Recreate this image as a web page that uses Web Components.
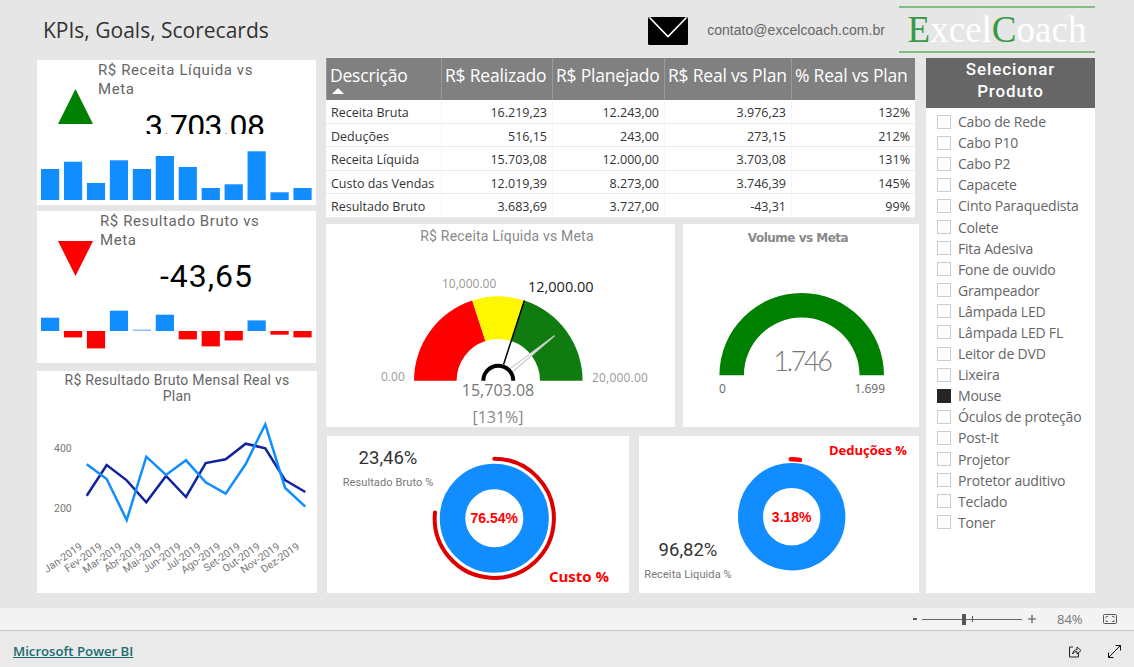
<!DOCTYPE html>
<html lang="pt-BR">
<head>
<meta charset="utf-8">
<title>KPIs, Goals, Scorecards</title>
<style>
	html, body { margin: 0; height: 100%; }
	body {
		width: 1134px;
		height: 667px;
		overflow: hidden;
		background: #e6e6e6;
		display: flex;
		flex-direction: column;
		font-family: "Open Sans", sans-serif;
	}
	#main {
		flex: none;
		height: 550px;
		display: flex;
		padding-left: 37px;
	}
	.col { display: flex; flex-direction: column; }
	#left { width: 280px; margin-right: 9px; padding-top: 2px; }
	#middle { width: 593px; margin-right: 7px; }
	.row { display: flex; flex: none; }
</style>
</head>
<body>
	<report-header>KPIs, Goals, Scorecards</report-header>
	<div id="main">
		<div class="col" id="left">
			<kpi-card dir="up" height="145" gap="6" baseline="55" title-left="61" value-left="108" value-top="9" value-clip="27" value-spacing="-0.7"
				values="31,38.3,17,39.7,31,44,33,12,15.7,48.7,7.7,12">
				<span slot="title">R$ Receita Líquida vs Meta</span>
				<span slot="value">3.703.08</span>
			</kpi-card>
			<kpi-card dir="down" height="152" gap="8" baseline="28" title-left="63" value-left="123" value-top="8" value-clip="38" value-spacing="1"
				values="13.3,-6.4,-17.4,20.3,1.6,16.3,-8.4,-15.4,-9.4,10.6,-3.7,-6.4">
				<span slot="title">R$ Resultado Bruto vs Meta</span>
				<span slot="value">-43,65</span>
			</kpi-card>
			<line-chart></line-chart>
		</div>
		<div class="col" id="middle">
			<data-table></data-table>
			<div class="row" style="margin-top:6px;margin-bottom:9px">
				<target-gauge></target-gauge>
				<volume-gauge></volume-gauge>
			</div>
			<div class="row" style="padding-left:1px">
				<donut-card w="302" ml="0" cx="167.3" cy="82.3" outer="54.5" inner="29" arc-r="59.6" arc-w="4" arc-color="#dc0000"
					pct="76.54" start="0" pct-text="76.54%" big="23,46%" big-x="61" big-y="28" small="Resultado Bruto %" small-x="61" small-y="50"
					label="Custo %" label-x="252" label-y="146" label-size="15"></donut-card>
				<donut-card w="280" ml="10" cx="152.7" cy="80.7" outer="53.7" inner="28.7" arc-r="57.4" arc-w="4.4" arc-color="#ff0000"
					pct="2.6" start="-1" pct-text="3.18%" big="96,82%" big-x="49" big-y="120" small="Receita Liquida %" small-x="49" small-y="142"
					label="Deduções %" label-x="229" label-y="19" label-size="13"></donut-card>
			</div>
		</div>
		<product-slicer>
			<span slot="title">Selecionar<br>Produto</span>
			<slicer-item>Cabo de Rede</slicer-item>
			<slicer-item>Cabo P10</slicer-item>
			<slicer-item>Cabo P2</slicer-item>
			<slicer-item>Capacete</slicer-item>
			<slicer-item>Cinto Paraquedista</slicer-item>
			<slicer-item>Colete</slicer-item>
			<slicer-item>Fita Adesiva</slicer-item>
			<slicer-item>Fone de ouvido</slicer-item>
			<slicer-item>Grampeador</slicer-item>
			<slicer-item>Lâmpada LED</slicer-item>
			<slicer-item>Lâmpada LED FL</slicer-item>
			<slicer-item>Leitor de DVD</slicer-item>
			<slicer-item>Lixeira</slicer-item>
			<slicer-item checked>Mouse</slicer-item>
			<slicer-item>Óculos de proteção</slicer-item>
			<slicer-item>Post-It</slicer-item>
			<slicer-item>Projetor</slicer-item>
			<slicer-item>Protetor auditivo</slicer-item>
			<slicer-item>Teclado</slicer-item>
			<slicer-item>Toner</slicer-item>
		</product-slicer>
	</div>
	<zoom-bar></zoom-bar>
	<app-footer>Microsoft Power BI</app-footer>

<script>
const DIN = `Roboto, "Liberation Sans", sans-serif`;
const SEGOE = `"Open Sans", "Noto Sans", sans-serif`;

// Point on a circle, angle in degrees clockwise from the top
function polar(cx, cy, r, deg) {
	const a = deg * Math.PI / 180;
	return [cx + r * Math.sin(a), cy - r * Math.cos(a)];
}

function ringSlice(cx, cy, ro, ri, from, to) {
	const [ax, ay] = polar(cx, cy, ro, from);
	const [bx, by] = polar(cx, cy, ro, to);
	const [cx2, cy2] = polar(cx, cy, ri, to);
	const [dx, dy] = polar(cx, cy, ri, from);
	return `M${ax} ${ay}A${ro} ${ro} 0 0 1 ${bx} ${by}L${cx2} ${cy2}A${ri} ${ri} 0 0 0 ${dx} ${dy}Z`;
}

class ReportHeader extends HTMLElement {
	constructor() {
		super();
		this.attachShadow({ mode: 'open' });
		this.shadowRoot.innerHTML = `
			<style>
				:host {
					display: flex;
					align-items: center;
					height: 58px;
					flex: none;
					padding: 0 39px 0 43px;
				}
				.title {
					font: 21px/1 ${SEGOE};
					color: #333;
					margin-top: 3px;
				}
				.mail {
					margin-left: auto;
					margin-right: 19px;
					margin-top: 4px;
					display: block;
				}
				.email {
					font: 14px/1 "Liberation Sans", sans-serif;
					color: #666;
					margin-right: 14px;
					margin-top: 2px;
					letter-spacing: 0.04px;
				}
				.logo {
					width: 196px;
					height: 43px;
					border-top: 2px solid #80bd80;
					border-bottom: 2px solid #80bd80;
					margin-top: 1px;
					font: 37px/43px "Liberation Serif", serif;
					color: #fff;
					text-align: center;
					white-space: nowrap;
				}
				.logo b { font-weight: normal; color: #3b9a46; }
			</style>
			<span class="title"><slot></slot></span>
			<svg class="mail" width="40" height="28" viewBox="0 0 40 28">
				<rect width="40" height="28" rx="1.5" fill="#000"/>
				<path d="M1.500 0.500L20 19.500 38.500 0.500" fill="none" stroke="#fff" stroke-width="1.600"/>
			</svg>
			<span class="email">contato@excelcoach.com.br</span>
			<div class="logo"><b>E</b>xcel<b>C</b>oach</div>
		`;
	}
}

class KpiCard extends HTMLElement {
	constructor() {
		super();
		this.attachShadow({ mode: 'open' });
	}

	connectedCallback() {
		const up = this.getAttribute('dir') === 'up';
		const baseline = +this.getAttribute('baseline');
		const values = this.getAttribute('values').split(',').map(Number);
		const bars = values.map((v, i) => {
			const x = 4 + i * 22.95;
			const y = v >= 0 ? baseline - v : baseline;
			const fill = v < 0 ? '#ff0000' : (Math.abs(v) < 2 ? '#8cc8ff' : '#118dff');
			return `<rect x="${x}" y="${y}" width="18.2" height="${Math.abs(v)}" fill="${fill}"/>`;
		}).join('');
		const arrow = up
			? `<polygon points="0,35 17.500,0 35,35" fill="#008000"/>`
			: `<polygon points="0,0 35,0 17.500,35" fill="#ff0000"/>`;

		this.shadowRoot.innerHTML = `
			<style>
				:host {
					display: flex;
					flex: none;
					flex-direction: column;
					justify-content: space-between;
					width: 279px;
					height: ${this.getAttribute('height')}px;
					margin-bottom: ${this.getAttribute('gap')}px;
					background: #fff;
					overflow: hidden;
				}
				.top { position: relative; padding-left: ${this.getAttribute('title-left')}px; padding-top: 1px; }
				.arrow { position: absolute; left: 21px; top: ${up ? 29 : 30}px; }
				.title {
					font: 15px/18.500px ${DIN};
					color: #666;
					letter-spacing: 0.6px;
					width: 175px;
				}
				.value {
					height: ${this.getAttribute('value-clip')}px;
					overflow: hidden;
					margin-top: ${this.getAttribute('value-top')}px;
					margin-left: ${this.getAttribute('value-left') - this.getAttribute('title-left')}px;
					font: 32px/38px ${DIN};
					color: #000;
					letter-spacing: ${this.getAttribute('value-spacing')}px;
					white-space: nowrap;
				}
				svg.bars { display: block; }
			</style>
			<div class="top">
				<svg class="arrow" width="35" height="35">${arrow}</svg>
				<div class="title"><slot name="title"></slot></div>
				<div class="value"><slot name="value"></slot></div>
			</div>
			<svg class="bars" width="279" height="60">${bars}</svg>
		`;
	}
}

class LineChart extends HTMLElement {
	constructor() {
		super();
		this.attachShadow({ mode: 'open' });

		const plan = [[170,298],[230,342],[290,465],[349,275],[408,330],[468,286],[527,352],[587,386],[647,297],[706,178],[765,368],[826,425]];
		const real = [[170,392],[230,300],[290,346],[349,412],[408,333],[468,396],[527,294],[587,283],[647,236],[706,250],[765,345],[826,381]];
		const toPoints = list => list.map(p => `${(p[0] / 3 - 7).toFixed(1)},${(p[1] / 3 - 6).toFixed(1)}`).join(' ');
		const months = ['Jan','Fev','Mar','Abr','Mai','Jun','Jul','Ago','Set','Out','Nov','Dez'];
		const labels = months.map((m, i) => {
			const x = 46 + i * 19.75;
			return `<text class="axis" text-anchor="end" transform="translate(${x} 177) rotate(-35)">${m}-2019</text>`;
		}).join('');

		this.shadowRoot.innerHTML = `
			<style>
				:host {
					display: block;
					flex: none;
					width: 280px;
					height: 222px;
					background: #fff;
				}
				.title {
					position: relative;
					font: 14px/16px ${DIN};
					color: #666;
					text-align: center;
					padding: 1px 24px 0;
					letter-spacing: 0.25px;
				}
				svg { position: absolute; display: block; }
				.wrap { position: relative; height: 222px; }
				.axis { font: 10.500px ${DIN}; fill: #777; }
			</style>
			<div class="wrap">
				<svg width="280" height="222">
					<polyline points="${toPoints(real)}" fill="none" stroke="#12239e" stroke-width="2.500"/>
					<polyline points="${toPoints(plan)}" fill="none" stroke="#118dff" stroke-width="2.500"/>
					<text class="axis" x="17" y="81">400</text>
					<text class="axis" x="17" y="141">200</text>
					${labels}
				</svg>
				<div class="title">R$ Resultado Bruto Mensal Real vs Plan</div>
			</div>
		`;
	}
}

class DataTable extends HTMLElement {
	constructor() {
		super();
		this.attachShadow({ mode: 'open' });

		const heads = ['Descrição', 'R$ Realizado', 'R$ Planejado', 'R$ Real vs Plan', '% Real vs Plan'];
		const rows = [
			['Receita Bruta', '16.219,23', '12.243,00', '3.976,23', '132%'],
			['Deduções', '516,15', '243,00', '273,15', '212%'],
			['Receita Líquida', '15.703,08', '12.000,00', '3.703,08', '131%'],
			['Custo das Vendas', '12.019,39', '8.273,00', '3.746,39', '145%'],
			['Resultado Bruto', '3.683,69', '3.727,00', '-43,31', '99%']
		];

		this.shadowRoot.innerHTML = `
			<style>
				:host {
					display: grid;
					flex: none;
					grid-template-columns: 115px 111px 112px 127px 124px;
					grid-template-rows: 42px repeat(5, 23.600px);
					width: 589px;
					height: 160px;
					background: #fff;
					font-family: ${SEGOE};
				}
				.head {
					background: #808080;
					color: #fff;
					font-size: 17.500px;
					line-height: 34px;
					padding: 0 3px;
					border-left: 1px solid #999;
					box-sizing: border-box;
					white-space: nowrap;
					overflow: hidden;
					position: relative;
					letter-spacing: -0.2px;
				}
				.head:first-child { border-left: 0; padding-left: 5px; font-size: 18px; }
				.sort {
					position: absolute;
					left: 5px;
					top: 30px;
					width: 0;
					height: 0;
					border-left: 6.500px solid transparent;
					border-right: 6.500px solid transparent;
					border-bottom: 6px solid #fff;
				}
				.cell {
					font-size: 12.500px;
					line-height: 25px;
					color: #333;
					padding: 0 5px 0 4px;
					text-align: right;
					border-bottom: 1px solid #eaeaea;
					border-left: 1px solid #f6f6f6;
					box-sizing: border-box;
					white-space: nowrap;
					overflow: hidden;
				}
				.cell.name { text-align: left; border-left: 0; padding-left: 5px; }
			</style>
			${heads.map((h, i) => `<div class="head">${h}${i === 0 ? '<span class="sort"></span>' : ''}</div>`).join('')}
			${rows.map(r => r.map((c, i) => `<div class="cell ${i === 0 ? 'name' : ''}">${c}</div>`).join('')).join('')}
		`;
	}
}

class TargetGauge extends HTMLElement {
	constructor() {
		super();
		this.attachShadow({ mode: 'open' });

		// Card starts at 326,224
		const cx = 172.3, cy = 156.7, ro = 84.3, ri = 41.7;
		const deg = f => -90 + f * 180;
		const [t1x, t1y] = polar(cx, cy, ro, deg(0.6));
		const [t2x, t2y] = polar(cx, cy, 17, deg(0.6));
		const tip = polar(cx, cy, 72, deg(0.785));
		const base1 = polar(cx, cy, 15, deg(0.785) - 8);
		const base2 = polar(cx, cy, 15, deg(0.785) + 8);

		this.shadowRoot.innerHTML = `
			<style>
				:host { display: block; flex: none; width: 349px; height: 203px; background: #fff; margin-right: 8px; }
				svg { display: block; }
				text { font-family: ${SEGOE}; }
				.title { font: 14px ${DIN}; fill: #888; letter-spacing: 0.2px; }
				.tick { font-size: 12px; fill: #999; }
			</style>
			<svg width="349" height="203">
				<text class="title" x="181" y="17" text-anchor="middle">R$ Receita Líquida vs Meta</text>
				<path d="${ringSlice(cx, cy, ro, ri, deg(0), deg(0.4))}" fill="#ff0000"/>
				<path d="${ringSlice(cx, cy, ro, ri, deg(0.4), deg(0.6))}" fill="#fff700"/>
				<path d="${ringSlice(cx, cy, ro, ri, deg(0.6), deg(1))}" fill="#107c10"/>
				<line x1="${t1x}" y1="${t1y}" x2="${t2x}" y2="${t2y}" stroke="#000" stroke-width="1.500"/>
				<polygon points="${tip.join(',')} ${base1.join(',')} ${base2.join(',')}" fill="#fff" stroke="#ccc" stroke-width="1.200"/>
				<path d="M${cx - 15} ${cy}A15 15 0 0 1 ${cx + 15} ${cy}" fill="none" stroke="#000" stroke-width="4"/>
				<text class="tick" x="55" y="157">0.00</text>
				<text class="tick" x="116" y="64">10,000.00</text>
				<text x="202" y="68" style="font-size:14.500px;fill:#222">12,000.00</text>
				<text class="tick" x="266" y="158" style="letter-spacing:0.2px">20,000.00</text>
				<text x="172" y="172" text-anchor="middle" style="font-size:16px;fill:#777">15,703.08</text>
				<text x="172" y="199" text-anchor="middle" style="font-size:16px;fill:#888">[131%]</text>
			</svg>
		`;
	}
}

class VolumeGauge extends HTMLElement {
	constructor() {
		super();
		this.attachShadow({ mode: 'open' });

		const cx = 118.7, cy = 151.3;
		this.shadowRoot.innerHTML = `
			<style>
				:host { display: block; flex: none; width: 236px; height: 203px; background: #fff; }
				svg { display: block; }
				.title { font: bold 12px "DejaVu Sans", sans-serif; fill: #888; letter-spacing: -0.5px; }
				.value { font: 300 27px Lato, ${SEGOE}; fill: #777; letter-spacing: -2.4px; }
				.tick { font: 12px ${SEGOE}; fill: #666; }
			</style>
			<svg width="236" height="203">
				<text class="title" x="115" y="18" text-anchor="middle">Volume vs Meta</text>
				<path d="${ringSlice(cx, cy, 82.3, 57.8, -90, 90)}" fill="#008000"/>
				<text class="value" x="119" y="147" text-anchor="middle">1.746</text>
				<text class="tick" x="36" y="169">0</text>
				<text class="tick" x="202" y="169" text-anchor="end">1.699</text>
			</svg>
		`;
	}
}

class DonutCard extends HTMLElement {
	constructor() {
		super();
		this.attachShadow({ mode: 'open' });
	}

	connectedCallback() {
		const a = name => this.getAttribute(name);
		const cx = +a('cx'), cy = +a('cy'), r = +a('arc-r');
		const from = +a('start');
		const to = from + +a('pct') * 3.6;
		const [sx, sy] = polar(cx, cy, r, from);
		const [ex, ey] = polar(cx, cy, r, to);
		const ringR = (+a('outer') + +a('inner')) / 2;

		this.shadowRoot.innerHTML = `
			<style>
				:host {
					display: block;
					flex: none;
					width: ${a('w')}px;
					height: 157px;
					background: #fff;
					margin-left: ${a('ml')}px;
				}
				svg { display: block; }
				.pct { font: bold 14px "Liberation Sans", sans-serif; fill: #ff0000; }
				.big { font: 18.500px ${DIN}; fill: #333; }
				.small { font: 11px ${DIN}; fill: #777; letter-spacing: 0.1px; }
				.label { font-family: ${SEGOE}; font-weight: 700; fill: #ff0000; }
			</style>
			<svg width="${a('w')}" height="157">
				<circle cx="${cx}" cy="${cy}" r="${ringR}" fill="none" stroke="#118dff" stroke-width="${+a('outer') - +a('inner')}"/>
				<path d="M${sx} ${sy}A${r} ${r} 0 ${to - from > 180 ? 1 : 0} 1 ${ex} ${ey}" fill="none" stroke="${a('arc-color')}" stroke-width="${a('arc-w')}" stroke-linecap="round"/>
				<text class="pct" x="${cx}" y="${cy + 5}" text-anchor="middle">${a('pct-text')}</text>
				<text class="big" x="${a('big-x')}" y="${a('big-y')}" text-anchor="middle">${a('big')}</text>
				<text class="small" x="${a('small-x')}" y="${a('small-y')}" text-anchor="middle">${a('small')}</text>
				<text class="label" x="${a('label-x')}" y="${a('label-y')}" text-anchor="middle" style="font-size:${a('label-size')}px">${a('label')}</text>
			</svg>
		`;
	}
}

class ProductSlicer extends HTMLElement {
	constructor() {
		super();
		this.attachShadow({ mode: 'open' });
		this.shadowRoot.innerHTML = `
			<style>
				:host {
					display: flex;
					flex: none;
					flex-direction: column;
					width: 169px;
					height: 535px;
					background: #fff;
				}
				.head {
					flex: none;
					height: 50px;
					background: #666;
					color: #fff;
					font: 500 17px/21.500px ${DIN};
					text-align: center;
					letter-spacing: 0.9px;
					padding-top: 1px;
					box-sizing: border-box;
				}
				.list { padding: 3px 0 0 11px; }
			</style>
			<div class="head"><slot name="title"></slot></div>
			<div class="list"><slot></slot></div>
		`;
	}
}

class SlicerItem extends HTMLElement {
	constructor() {
		super();
		this.attachShadow({ mode: 'open' });
		this.shadowRoot.innerHTML = `
			<style>
				:host {
					display: flex;
					align-items: center;
					height: 21.100px;
					font: 14px/21px ${SEGOE};
					color: #666;
					letter-spacing: -0.2px;
				}
				.box {
					width: 14px;
					height: 14px;
					border: 1px solid #ccc;
					box-sizing: border-box;
					margin-right: 7px;
					flex: none;
				}
				:host([checked]) .box { background: #252525; border-color: #252525; }
			</style>
			<span class="box"></span>
			<slot></slot>
		`;
	}
}

class ZoomBar extends HTMLElement {
	constructor() {
		super();
		this.attachShadow({ mode: 'open' });
		this.shadowRoot.innerHTML = `
			<style>
				:host {
					display: flex;
					align-items: center;
					height: 22px;
					flex: none;
					background: #f3f3f3;
					border-bottom: 1px solid #c8c8c8;
					padding-left: 913px;
					font: 13px ${SEGOE};
					color: #777;
				}
				.minus { width: 4px; height: 2px; background: #555; margin-right: 5px; }
				.track { position: relative; width: 100px; height: 1px; background: #666; }
				.thumb { position: absolute; left: 40px; top: -5px; width: 4px; height: 11px; background: #555; }
				.tick { position: absolute; left: 50px; top: -3px; width: 1px; height: 6px; background: #555; }
				.plus { width: 8px; height: 8px; margin-left: 6px; display: block; }
				.pct { margin-left: 21px; width: 28px; }
				.fit { margin-left: 18px; display: block; }
			</style>
			<span class="minus"></span>
			<span class="track"><span class="thumb"></span><span class="tick"></span></span>
			<svg class="plus" viewBox="0 0 8 8"><path d="M0 4H8M4 0V8" stroke="#555" stroke-width="1.200"/></svg>
			<span class="pct">84%</span>
			<svg class="fit" width="14" height="10" viewBox="0 0 14 10" fill="none" stroke="#555">
				<rect x="0.500" y="0.500" width="13" height="9" rx="1"/>
				<path d="M3 4V2.500H5M11 4V2.500H9M3 6V7.500H5M11 6V7.500H9" stroke-width="0.800"/>
			</svg>
		`;
	}
}

class AppFooter extends HTMLElement {
	constructor() {
		super();
		this.attachShadow({ mode: 'open' });
		this.shadowRoot.innerHTML = `
			<style>
				:host {
					display: flex;
					align-items: center;
					flex: none;
					height: 36px;
					box-sizing: border-box;
					background: #eaeaea;
					padding: 4px 13px 0;
				}
				a {
					font: 600 13.200px ${SEGOE};
					color: #1a6b70;
					text-decoration: underline;
				}
				.share { margin-left: auto; display: block; }
				.expand { margin-left: 26px; display: block; }
			</style>
			<a href="#"><slot></slot></a>
			<svg class="share" width="14" height="13" viewBox="0 0 14 13" fill="none" stroke="#222" stroke-width="1">
				<path d="M5 2H1.500V12H10.500V8"/>
				<path d="M4.500 9C5 6 7 4.500 9 4.500V2L13 5.500 9 9V6.500C7.500 6.500 6 7 4.500 9Z"/>
			</svg>
			<svg class="expand" width="13" height="13" viewBox="0 0 13 13" fill="none" stroke="#111" stroke-width="1">
				<path d="M0.500 12.500L12.500 0.500M7.500 0.500H12.500V5.500M0.500 7.500V12.500H5.500"/>
			</svg>
		`;
	}
}

customElements.define('report-header', ReportHeader);
customElements.define('kpi-card', KpiCard);
customElements.define('line-chart', LineChart);
customElements.define('data-table', DataTable);
customElements.define('target-gauge', TargetGauge);
customElements.define('volume-gauge', VolumeGauge);
customElements.define('donut-card', DonutCard);
customElements.define('product-slicer', ProductSlicer);
customElements.define('slicer-item', SlicerItem);
customElements.define('zoom-bar', ZoomBar);
customElements.define('app-footer', AppFooter);
</script>
</body>
</html>
